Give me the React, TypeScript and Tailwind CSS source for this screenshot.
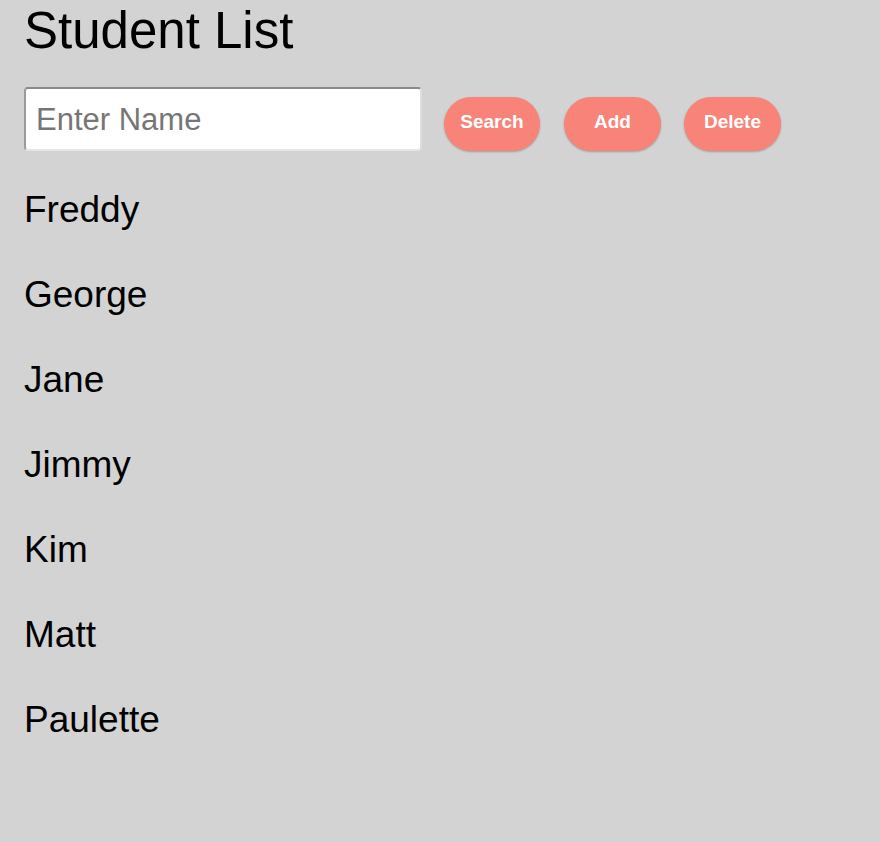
import React from "react";

const names = ["Freddy", "George", "Jane", "Jimmy", "Kim", "Matt", "Paulette"];

export default function App() {
  return (
    <div
      className="min-h-[842px] w-full bg-[#d3d3d3] pl-[24px] pt-[3px] text-black"
      style={{ fontFamily: '"Liberation Sans", Arial, Helvetica, sans-serif' }}
    >
      <h1 className="m-0 text-[51px] font-normal leading-[56px]">Student List</h1>
      <div className="mt-[28px] flex items-end">
        <input
          type="text"
          placeholder="Enter Name"
          className="box-border h-[64px] w-[398px] rounded-[4px] border-2 border-t-[#8a8a8a] border-l-[#9c9c9c] border-r-[#dedede] border-b-[#e6e6e6] bg-white pl-[10px] pt-[2px] text-[31px] text-black outline-none placeholder:text-[#767676]"
        />
        <button className="ml-[22px] h-[54px] w-[96px] rounded-full bg-[#f88379] pb-[3px] text-[19px] font-bold text-white shadow-[0_1px_2px_rgba(0,0,0,0.25)]">
          Search
        </button>
        <button className="ml-[24px] h-[54px] w-[97px] rounded-full bg-[#f88379] pb-[3px] text-[19px] font-bold text-white shadow-[0_1px_2px_rgba(0,0,0,0.25)]">
          Add
        </button>
        <button className="ml-[23px] h-[54px] w-[97px] rounded-full bg-[#f88379] pb-[3px] text-[19px] font-bold text-white shadow-[0_1px_2px_rgba(0,0,0,0.25)]">
          Delete
        </button>
      </div>
      <ul className="m-0 mt-[38px] flex list-none flex-col gap-[44px] p-0">
        {names.map((n) => (
          <li key={n} className="text-[37px] leading-[41px]">
            {n}
          </li>
        ))}
      </ul>
    </div>
  );
}
